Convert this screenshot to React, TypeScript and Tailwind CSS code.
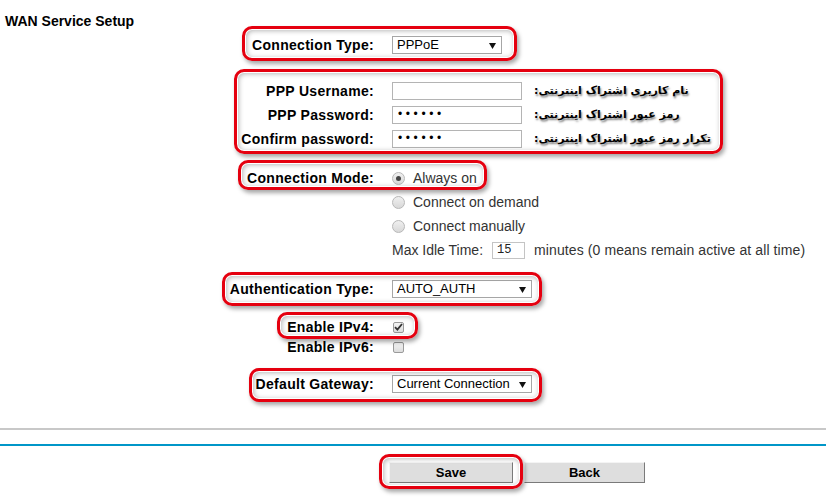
import React from 'react';

const LABEL_FONT = { fontFamily: '"Liberation Sans", Arial, sans-serif' };

const Mark: React.FC<{ className: string }> = ({ className }) => (
  <div
    className={`absolute pointer-events-none rounded-[10px] border-[3px] border-[#e5000f] shadow-[2px_3px_4px_rgba(0,0,0,0.35),inset_0_0_0_1px_#ffffff,inset_1px_1px_5px_1px_rgba(0,0,0,0.28)] ${className}`}
  />
);

const Label: React.FC<{ children: React.ReactNode }> = ({ children }) => (
  <div className="w-[374px] shrink-0 text-right text-[14px] font-bold tracking-[0.3px] text-black">{children}</div>
);

const Arrow = () => (
  <svg width="7" height="6" viewBox="0 0 7 6" className="absolute right-[5px] top-[6px]">
    <path d="M0 0 H7 L3.5 6 Z" fill="#111" />
  </svg>
);

const FakeSelect: React.FC<{ value: string; w: string }> = ({ value, w }) => (
  <div className={`relative ml-[18px] h-[18px] ${w} border border-[#a6a6a6] bg-white pl-[4px] text-[13px] leading-[16px] text-black`}>
    {value}
    <Arrow />
  </div>
);

const TextBox: React.FC<{ dots?: boolean }> = ({ dots }) => (
  <div className="ml-[18px] h-[18px] w-[130px] border border-[#b4b4b4] bg-white pl-[5px] text-[12px] leading-[15px] tracking-[3.6px] text-black">
    {dots ? '••••••' : ''}
  </div>
);

const Radio: React.FC<{ checked?: boolean }> = ({ checked }) => (
  <div className="flex h-[13px] w-[13px] items-center justify-center rounded-full border border-[#b8b8b8] bg-gradient-to-b from-[#f0f0f0] to-[#d8d8d8]">
    {checked && <div className="h-[5px] w-[5px] rounded-full bg-[#444]" />}
  </div>
);

const Check: React.FC<{ checked?: boolean }> = ({ checked }) => (
  <div className="ml-[19px] flex h-[11px] w-[11px] items-center justify-center rounded-[2px] border border-[#9a9a9a] bg-gradient-to-b from-[#f4f4f4] to-[#dcdcdc]">
    {checked && (
      <svg width="9" height="8" viewBox="0 0 9 8">
        <path d="M1 4.2 L3.4 6.6 L8 1" fill="none" stroke="#333" strokeWidth="1.8" />
      </svg>
    )}
  </div>
);

const Persian: React.FC<{ children: React.ReactNode }> = ({ children }) => (
  <span
    dir="rtl"
    className="ml-[12px] text-[11px] font-bold text-black [text-shadow:1px_2px_2px_rgba(0,0,0,0.5)]"
    style={{ fontFamily: '"DejaVu Sans", sans-serif' }}
  >
    {children}
  </span>
);

const Option: React.FC<{ checked?: boolean; text: string }> = ({ checked, text }) => (
  <div className="flex h-6 items-center">
    <div className="w-[392px] shrink-0" />
    <Radio checked={checked} />
    <span className="ml-[8px] text-[14px] text-[#333]">{text}</span>
  </div>
);

const App: React.FC = () => {
  return (
    <div className="relative h-[500px] w-[826px] overflow-hidden bg-white" style={LABEL_FONT}>
      <div className="pl-[5px] pt-[14px] text-[14px] font-bold leading-[14px] text-black">WAN Service Setup</div>

      <div className="mt-[5px] flex h-6 items-center">
        <Label>Connection Type:</Label>
        <FakeSelect value="PPPoE" w="w-[110px]" />
      </div>

      <div className="mt-[22px] flex h-6 items-center">
        <Label>PPP Username:</Label>
        <TextBox />
        <Persian>نام کاربری اشتراک اینترنتی:</Persian>
      </div>
      <div className="flex h-6 items-center">
        <Label>PPP Password:</Label>
        <TextBox dots />
        <Persian>رمز عبور اشتراک اینترنتی:</Persian>
      </div>
      <div className="flex h-6 items-center">
        <Label>Confirm password:</Label>
        <TextBox dots />
        <Persian>تکرار رمز عبور اشتراک اینترنتی:</Persian>
      </div>

      <div className="mt-[15px] flex h-6 items-center">
        <Label>Connection Mode:</Label>
        <div className="ml-[18px]">
          <Radio checked />
        </div>
        <span className="ml-[8px] text-[14px] text-[#333]">Always on</span>
      </div>
      <Option text="Connect on demand" />
      <Option text="Connect manually" />
      <div className="flex h-6 items-center text-[14px] text-[#333]">
        <div className="w-[392px] shrink-0" />
        <span>Max Idle Time:</span>
        <div
          className="ml-[9px] h-[17px] w-[33px] border border-[#c4c4c4] bg-white pl-[4px] text-[12px] leading-[15px] text-[#222]"
          style={{ fontFamily: '"Liberation Mono", monospace' }}
        >
          15
        </div>
        <span className="ml-[9px] tracking-[0.1px]">minutes (0 means remain active at all time)</span>
      </div>

      <div className="mt-[15px] flex h-6 items-center">
        <Label>Authentication Type:</Label>
        <FakeSelect value="AUTO_AUTH" w="w-[140px]" />
      </div>

      <div className="mt-[16px] flex h-5 items-center">
        <Label>Enable IPv4:</Label>
        <Check checked />
      </div>
      <div className="flex h-5 items-center">
        <Label>Enable IPv6:</Label>
        <Check />
      </div>

      <div className="mt-[15px] flex h-6 items-center">
        <Label>Default Gateway:</Label>
        <FakeSelect value="Current Connection" w="w-[140px]" />
      </div>

      <div className="mt-[32px] h-[2px] bg-[#c8c8c8]" />
      <div className="mt-[14px] h-[2px] bg-[#0096c8]" />

      <div className="mt-[16px] flex gap-[11px] pl-[389px]">
        <button className="h-[21px] w-[124px] border border-t-[#f4f4f4] border-l-[#f4f4f4] border-b-[#7a7a7a] border-r-[#7a7a7a] bg-[#dedede] text-[13px] font-bold text-black">
          Save
        </button>
        <button className="h-[21px] w-[121px] border border-t-[#f4f4f4] border-l-[#f4f4f4] border-b-[#7a7a7a] border-r-[#7a7a7a] bg-[#dedede] text-[13px] font-bold text-black">
          Back
        </button>
      </div>

      <Mark className="left-[242px] top-[26px] h-[35px] w-[275px]" />
      <Mark className="left-[234px] top-[69px] h-[85px] w-[489px]" />
      <Mark className="left-[238px] top-[160px] h-[30px] w-[249px]" />
      <Mark className="left-[222px] top-[272px] h-[34px] w-[320px]" />
      <Mark className="left-[277px] top-[312px] h-[27px] w-[141px]" />
      <Mark className="left-[249px] top-[368px] h-[34px] w-[293px]" />
      <Mark className="left-[379px] top-[454px] h-[35px] w-[144px]" />
    </div>
  );
};

export default App;
